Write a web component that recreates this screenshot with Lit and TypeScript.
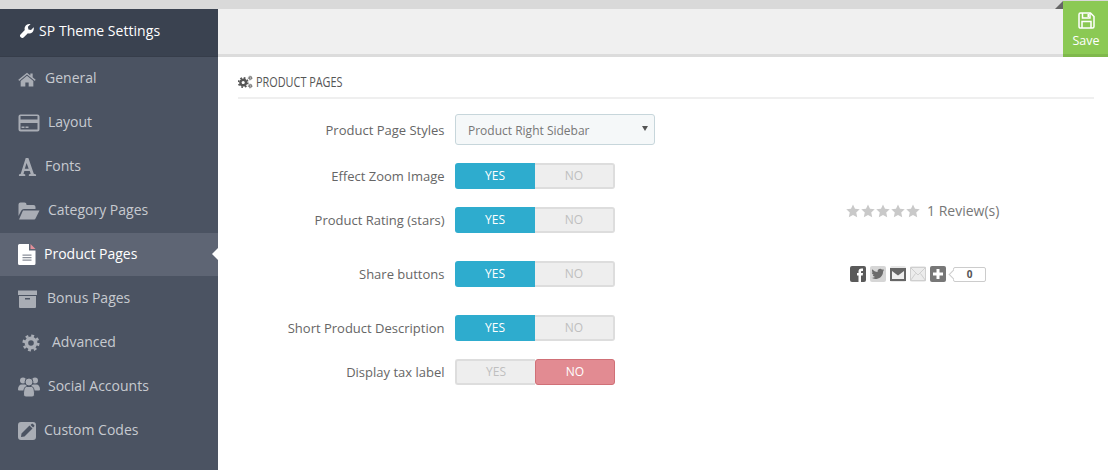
import { LitElement, html, css, svg } from "lit";
import { customElement } from "lit/decorators.js";

const ic = (w: number, h: number, vb: string, body: unknown, cls = "") =>
  html`<svg class=${cls} width=${w} height=${h} viewBox=${vb} fill="currentColor">${body}</svg>`;

const star = "M8 0.5l2.3 5 5.4.6-4 3.7 1.1 5.4L8 12.5l-4.800 2.700 1.100-5.400-4-3.700 5.400-.6z";

const gearBody = (cx: number, cy: number, r: number, t: number) => svg`
  <circle cx=${cx} cy=${cy} r=${r} fill="none" stroke="currentColor" stroke-width=${t}/>
  <circle cx=${cx} cy=${cy} r=${r + t * 0.75} fill="none" stroke="currentColor" stroke-width=${t * 0.7} stroke-dasharray=${`${(2 * Math.PI * (r + t * 0.75)) / 16} ${(2 * Math.PI * (r + t * 0.75)) / 16}`}/>`;

const icons: Record<string, unknown> = {
  home: ic(18, 15, "0 0 27 22", svg`<path d="M13.500 1L0.500 11.500l1.300 1.600L13.500 3.600l11.700 9.500 1.300-1.600L22 7.800V2h-3.500v2.900z"/><path d="M13.500 5.500L4 13.200V21.500h7v-6h5v6h7v-8.300z"/>`),
  card: ic(22, 18, "0 0 22 18", svg`<path fill-rule="evenodd" d="M2.500 0.500h17a2 2 0 0 1 2 2v13a2 2 0 0 1-2 2h-17a2 2 0 0 1-2-2v-13a2 2 0 0 1 2-2zM2.500 2v3.500h17V2zM2.500 9v6.500h17V9zM3.500 12.500h3v1.500h-3zM7.500 12.500h3v1.500h-3z"/>`),
  font: ic(19, 18, "0 0 20 20", svg`<path fill-rule="evenodd" d="M8 0h3l6 17.500 2.500.8V20h-8v-1.700l2-.7-1-3.100H6.500l-1 3.100 2 .7V20H.5v-1.700l2-.8zM9 5.500l-2 6.500h4.300z"/>`),
  folder: ic(22, 18, "0 0 22 18", svg`<path d="M0.500 14V2.500a2 2 0 0 1 2-2h4a2 2 0 0 1 2 2v.5h7a2 2 0 0 1 2 2v2H6a3 3 0 0 0-2.800 1.800z"/><path d="M5 8.500h16.500l-4 8a1.500 1.500 0 0 1-1.300 1H1z"/>`),
  file: ic(18, 21, "0 0 18 21", svg`<path fill="#fff" d="M1.500 0h9.500v6.500h6.500V19.500a1.500 1.500 0 0 1-1.500 1.500H1.500A1.500 1.500 0 0 1 0 19.500V1.500A1.500 1.500 0 0 1 1.500 0z"/><path fill="#e4909a" d="M12.500 0l5 5h-5z"/><path fill="#8a8f99" d="M4.500 10.500h9v1.300h-9zM4.500 13h9v1.300h-9zM4.500 15.500h9v1.300h-9z"/>`),
  box: ic(19, 18, "0 0 19 18", svg`<path d="M0 0.500h19v4.500H0z"/><path fill-rule="evenodd" d="M1 6h17v11a1 1 0 0 1-1 1H2a1 1 0 0 1-1-1zM7 8v1.500h5V8z"/>`),
  gear: ic(18, 18, "0 0 18 18", gearBody(9, 9, 4.6, 3.6)),
  users: ic(22, 20, "0 0 22 20", svg`<circle cx="5" cy="3.500" r="3"/><circle cx="17" cy="3.500" r="3"/><path d="M0 12.500C0 9.500 1.500 7.500 3.500 7.500h15c2 0 3.500 2 3.500 5a1 1 0 0 1-1 1H1a1 1 0 0 1-1-1z"/><g stroke="#4b5362" stroke-width="1"><circle cx="11" cy="5" r="4"/><path d="M5.500 17c0-5 1.500-7.500 3-7.500h5c1.500 0 3 2.500 3 7.500 0 2-1 3-2.500 3H8c-1.500 0-2.500-1-2.500-3z"/></g>`),
  edit: ic(18, 18, "0 0 18 18", svg`<path fill-rule="evenodd" d="M3 0h12a3 3 0 0 1 3 3v12a3 3 0 0 1-3 3H3a3 3 0 0 1-3-3V3a3 3 0 0 1 3-3zM11.500 3.500L3.500 11.500 3 15l3.500-.5 8-8zM12.500 2.900l2.600 2.600 1-1a1 1 0 0 0 0-1.400l-1.200-1.200a1 1 0 0 0-1.400 0z"/>`),
};

const menu = [
  { t: "General", i: "home", x: 18, gap: 9 },
  { t: "Layout", i: "card", x: 18, gap: 8 },
  { t: "Fonts", i: "font", x: 18, gap: 8 },
  { t: "Category Pages", i: "folder", x: 18, gap: 8 },
  { t: "Product Pages", i: "file", x: 18, gap: 8, active: true },
  { t: "Bonus Pages", i: "box", x: 18, gap: 10 },
  { t: "Advanced", i: "gear", x: 22, gap: 12 },
  { t: "Social Accounts", i: "users", x: 18, gap: 8 },
  { t: "Custom Codes", i: "edit", x: 18, gap: 8 },
];

const rows = [
  { label: "Effect Zoom Image", on: true, cls: "g18" },
  { label: "Product Rating (stars)", on: true, cls: "g28", extra: "rating" },
  { label: "Share buttons", on: true, cls: "g28", extra: "share" },
  { label: "Short Product Description", on: true, cls: "g18" },
  { label: "Display tax label", on: false, cls: "" },
];

@customElement("app-root")
export class AppRoot extends LitElement {
  static styles = css`
    :host { display: block; width: 1108px; height: 470px; overflow: hidden; background: #fff; font-family: "Open Sans", sans-serif; font-size: 13px; color: #666; }
    .page { display: flex; flex-direction: column; height: 470px; position: relative; }
    .strip { height: 9px; background: #d9d9d9; flex: none; }
    .body { display: flex; flex: 1; min-height: 0; }
    .side { width: 218px; flex: none; background: #4b5362; color: #c3c6cc; }
    .brand { height: 48px; box-sizing: border-box; background: #3a4250; border-bottom: 1px solid #363d4a; display: flex; align-items: center; padding-left: 20px; gap: 5px; color: #fff; font-size: 14px; letter-spacing: .05px; padding-bottom: 4px; }
    .item { height: 44px; display: flex; align-items: center; font-size: 14px; position: relative; color: #c7cad0; box-sizing: border-box; }
    .item span { margin-bottom: 4px; }
    .item svg { color: #a9adb5; flex: none; }
    .item.active { background: #5e6574; color: #fff; height: 43px; margin-bottom: 1px; }
    .item.active span { margin-bottom: 2px; }
    .item.active::after { content: ""; position: absolute; right: 0; top: 15px; border: 6px solid transparent; border-right-color: #fff; border-left-width: 0; }
    .main { flex: 1; min-width: 0; display: flex; flex-direction: column; }
    .bar { height: 45px; background: #f0f0f0; border-bottom: 3px solid #dcdcdc; flex: none; }
    .save { position: absolute; right: 0; top: 1px; width: 45px; height: 56px; box-sizing: border-box; background: #8bc954; border-bottom: 3px solid #7fb84c; color: #fff; display: flex; flex-direction: column; align-items: center; padding: 11px 0 0 1px; gap: 3px; font-size: 12.500px; }
    .corner { position: absolute; right: 45px; top: 1px; width: 0; height: 0; border-style: solid; border-width: 0 0 8px 8px; border-color: transparent transparent #666 transparent; }
    .content { padding: 16px 14px 0 20px; }
    .title { height: 24px; border-bottom: 2px solid #efefef; display: flex; align-items: flex-start; gap: 3px; color: #555; }
    .title span { display: inline-block; font-size: 14.500px; line-height: 18px; transform: scaleX(.75); transform-origin: left center; white-space: nowrap; }
    .title svg { margin-top: 2px; color: #555; flex: none; }
    .form { padding-top: 15px; }
    .row { display: flex; align-items: center; }
    .g18 { margin-bottom: 18px; }
    .g28 { margin-bottom: 28px; }
    .label { width: 206.500px; flex: none; text-align: right; padding-right: 10.500px; font-size: 13px; }
    .select { width: 200px; height: 31px; box-sizing: border-box; border: 1px solid #c7d6db; border-radius: 3px; background: #f5f8f9; display: flex; align-items: center; padding: 2px 12px 0; font-size: 12px; color: #777; position: relative; }
    .select::after { content: ""; position: absolute; right: 6px; top: 11px; border: 3px solid transparent; border-top: 5px solid #555; border-bottom-width: 0; }
    .toggle { display: flex; width: 160px; height: 26px; box-sizing: border-box; font-size: 12px; text-align: center; line-height: 25px; }
    .toggle > div { width: 80px; box-sizing: border-box; }
    .t-on { background: #2eacce; color: #fff; border-radius: 3px 0 0 3px; }
    .t-off { background: #eee; color: #bfbfbf; border: 2px solid #ddd; line-height: 22px; }
    .t-off.r { border-radius: 0 3px 3px 0; border-left: 0; }
    .t-off.l { border-radius: 3px 0 0 3px; border-right: 0; }
    .t-no { background: #e28b92; color: #fff; border: 1px solid #d07077; border-radius: 3px; line-height: 24px; }
    .extra { display: flex; align-items: center; }
    .rating { color: #777; font-size: 14px; gap: 7px; align-self: flex-start; margin-top: -5px; margin-left: 231px; line-height: 18px; }
    .stars { display: flex; gap: 1px; color: #c9c9c9; }
    .share { margin-left: 235px; gap: 4px; }
    .sb { width: 16px; height: 16px; border-radius: 2px; display: flex; align-items: center; justify-content: center; box-sizing: border-box; flex: none; }
    .dark { background: #5a5a5a; color: #fff; }
    .mid { background: #d6d6d6; color: #6c6c6c; }
    .mail { background: #e8e8e8; }
    .light { background: #ececec; color: #fff; }
    .plus { background: #777; color: #fff; }
    .count { margin-left: 3px; width: 33px; height: 15px; box-sizing: border-box; border: 1px solid #ccc; border-radius: 2px; font-size: 10px; font-weight: 700; color: #555; text-align: center; line-height: 13px; position: relative; background: #fff; }
    .count::before { content: ""; position: absolute; left: -4px; top: 3px; width: 6px; height: 6px; background: #fff; border-left: 1px solid #ccc; border-bottom: 1px solid #ccc; transform: rotate(45deg); }
  `;

  private extra(kind?: string) {
    if (kind === "rating")
      return html`<div class="extra rating"><div class="stars">${[0, 1, 2, 3, 4].map(() => ic(14, 14, "0 0 16 16", svg`<path d=${star}/>`))}</div><span>1 Review(s)</span></div>`;
    if (kind === "share")
      return html`<div class="extra share">
        <div class="sb dark">${ic(16, 16, "0 0 16 16", svg`<path d="M8.500 16V9.500H7V7h1.500V5.500C8.500 3.500 9.500 2.500 11.500 2.500H13V5h-1c-.7 0-1 .3-1 1v1h2l-.3 2.500H11V16z"/>`)}</div>
        <div class="sb mid">${ic(14, 14, "0 0 16 16", svg`<path d="M15 3.500c-.5.300-1.100.400-1.700.500.6-.4 1.100-1 1.300-1.700-.6.300-1.200.600-1.900.700C12.100 2.400 11.300 2 10.500 2 8.900 2 7.500 3.400 7.500 5c0 .2 0 .5.100.7C5.100 5.600 2.900 4.400 1.500 2.600c-.8 1.300-.4 3 .9 3.900-.5 0-1-.1-1.400-.4 0 1.500 1 2.700 2.400 3-.4.1-.9.1-1.400 0 .4 1.200 1.500 2 2.800 2.100C3.700 12 2 12.600.5 12.400 5 15.300 13.800 13 13.800 5c.5-.4 1-.9 1.200-1.500z"/>`)}</div>
        <div class="sb mail">${ic(16, 13, "0 0 16 13", svg`<path fill="#666" d="M0 0h16v13H0z"/><path fill="#eee" d="M2 3l6 4.500L14 3v8H2z"/>`)}</div>
        <div class="sb light">${ic(16, 14, "0 0 16 14", svg`<path fill="none" stroke="#cfcfcf" d="M.5.500h15v13H.5zM.5.500L8 8l7.500-7.500M.5 13.500l5-7M15.500 13.500l-5-7"/>`)}</div>
        <div class="sb plus">${ic(12, 12, "0 0 12 12", svg`<path d="M4.500 1h3v3.500H11v3H7.500V11h-3V7.500H1v-3h3.500z"/>`)}</div>
        <div class="count">0</div>
      </div>`;
    return "";
  }

  render() {
    return html`<div class="page">
      <div class="strip"></div>
      <div class="body">
        <nav class="side">
          <div class="brand">
            ${ic(14, 14, "0 0 14 14", svg`<path d="M13.700 3.200L11 5.900 8.400 5.400 7.900 2.800 10.600.100C8.800-.3 6.900.3 5.800 1.500 4.600 2.800 4.300 4.500 4.800 6L.5 10.400c-.7.700-.7 1.800 0 2.500l.6.600c.7.700 1.800.7 2.500 0L7.900 9.200c1.500.5 3.200.2 4.500-1 1.200-1.200 1.700-3.200 1.300-5z"/>`)}
            <span>SP Theme Settings</span>
          </div>
          ${menu.map(
            (m) => html`<div class="item ${m.active ? "active" : ""}" style="padding-left:${m.x}px;gap:${m.gap}px">
              ${icons[m.i]}<span>${m.t}</span>
            </div>`
          )}
        </nav>
        <main class="main">
          <div class="bar"></div>
          <div class="content">
            <div class="title">
              ${ic(15, 14, "0 0 15 14", svg`${gearBody(5.2, 7.5, 2.8, 2.4)}${gearBody(12.2, 3, 1.2, 1)}${gearBody(12.2, 11, 1.2, 1)}`)}
              <span>PRODUCT PAGES</span>
            </div>
            <div class="form">
              <div class="row g18">
                <div class="label">Product Page Styles</div>
                <div class="select">Product Right Sidebar</div>
              </div>
              ${rows.map(
                (r) => html`<div class="row ${r.cls}">
                  <div class="label">${r.label}</div>
                  ${r.on
                    ? html`<div class="toggle"><div class="t-on">YES</div><div class="t-off r">NO</div></div>`
                    : html`<div class="toggle"><div class="t-off l">YES</div><div class="t-no">NO</div></div>`}
                  ${this.extra(r.extra)}
                </div>`
              )}
            </div>
          </div>
        </main>
      </div>
      <div class="corner"></div>
      <div class="save">
        ${ic(17, 17, "0 0 17 17", svg`<g fill="none" stroke="currentColor" stroke-width="1.500"><path d="M2.500 1h10l3.500 3.500V14.500a1.500 1.500 0 0 1-1.500 1.500h-12.500A1.500 1.500 0 0 1 1 14.500V2.500A1.500 1.500 0 0 1 2.500 1z"/><path d="M4.500 1v5h7.500V1M4 16V9.500h9V16"/></g><path d="M9.500 2h1.500v3H9.500z"/>`)}
        <span>Save</span>
      </div>
    </div>`;
  }
}
